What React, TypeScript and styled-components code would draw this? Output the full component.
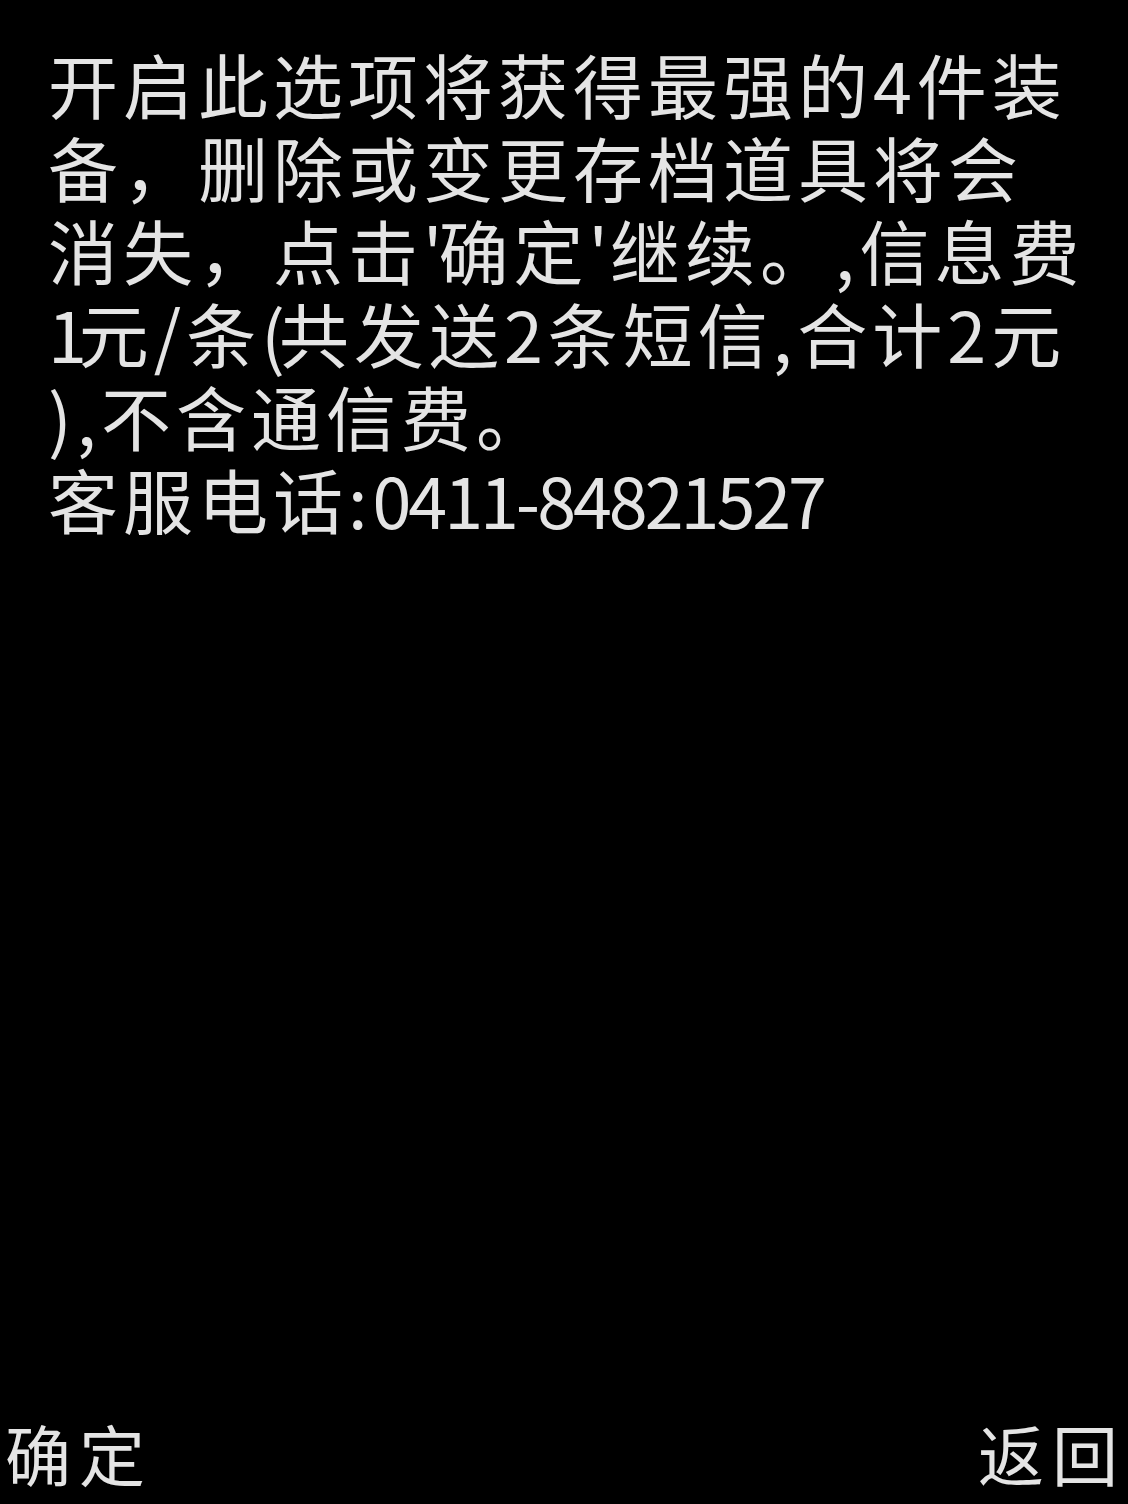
import styled, { createGlobalStyle } from "styled-components";

const GlobalStyle = createGlobalStyle`
  html, body {
    margin: 0;
    padding: 0;
    background: #000;
  }
`

const Screen = styled.div`
  width: 1128px;
  height: 1504px;
  background: #000;
  color: #e4e4e4;
  font-family: "Noto Sans CJK SC", "Noto Sans", sans-serif;
  display: flex;
  flex-direction: column;
  overflow: hidden;
`

// ? 提示文字
const Message = styled.div`
  padding-top: 42px;
  padding-left: 48px;
  display: flex;
  flex-direction: column;
`

const Line = styled.div<{ $indent?: number }>`
  font-size: 70px;
  line-height: 83px;
  height: 83px;
  letter-spacing: 5px;
  white-space: nowrap;
  padding-left: ${(props) => props.$indent ?? 0}px;
`

// ? 窄字符 (数字, 标点)
const Narrow = styled.span<{ $spacing: number }>`
  letter-spacing: ${(props) => props.$spacing}px;
`

// ? 软键栏
const SoftKeys = styled.div`
  margin-top: auto;
  display: flex;
  justify-content: space-between;
  align-items: center;
  padding: 0 2px 10px 5px;
  font-size: 66px;
  line-height: 83px;
  letter-spacing: 8px;
`

const SoftKey = styled.span`
  white-space: nowrap;
`

const App: React.FC = () => {
  return (
    <Screen>
      <GlobalStyle />
      <Message>
        <Line>开启此选项将获得最强的4件装</Line>
        <Line>备，删除或变更存档道具将会</Line>
        <Line>
          消失，点击<Narrow $spacing={-4}>'</Narrow>确定<Narrow $spacing={2}>'</Narrow>继续。,信息费
        </Line>
        <Line $indent={-2}>
          <Narrow $spacing={-8}>1</Narrow>元/条<Narrow $spacing={-6}>(</Narrow>共发送2条短信,合计2元
        </Line>
        <Line $indent={-2}>),不含通信费。</Line>
        <Line>
          客服电话:<Narrow $spacing={-3}>0411-84821527</Narrow>
        </Line>
      </Message>
      <SoftKeys>
        <SoftKey>确定</SoftKey>
        <SoftKey>返回</SoftKey>
      </SoftKeys>
    </Screen>
  )
}

export default App
